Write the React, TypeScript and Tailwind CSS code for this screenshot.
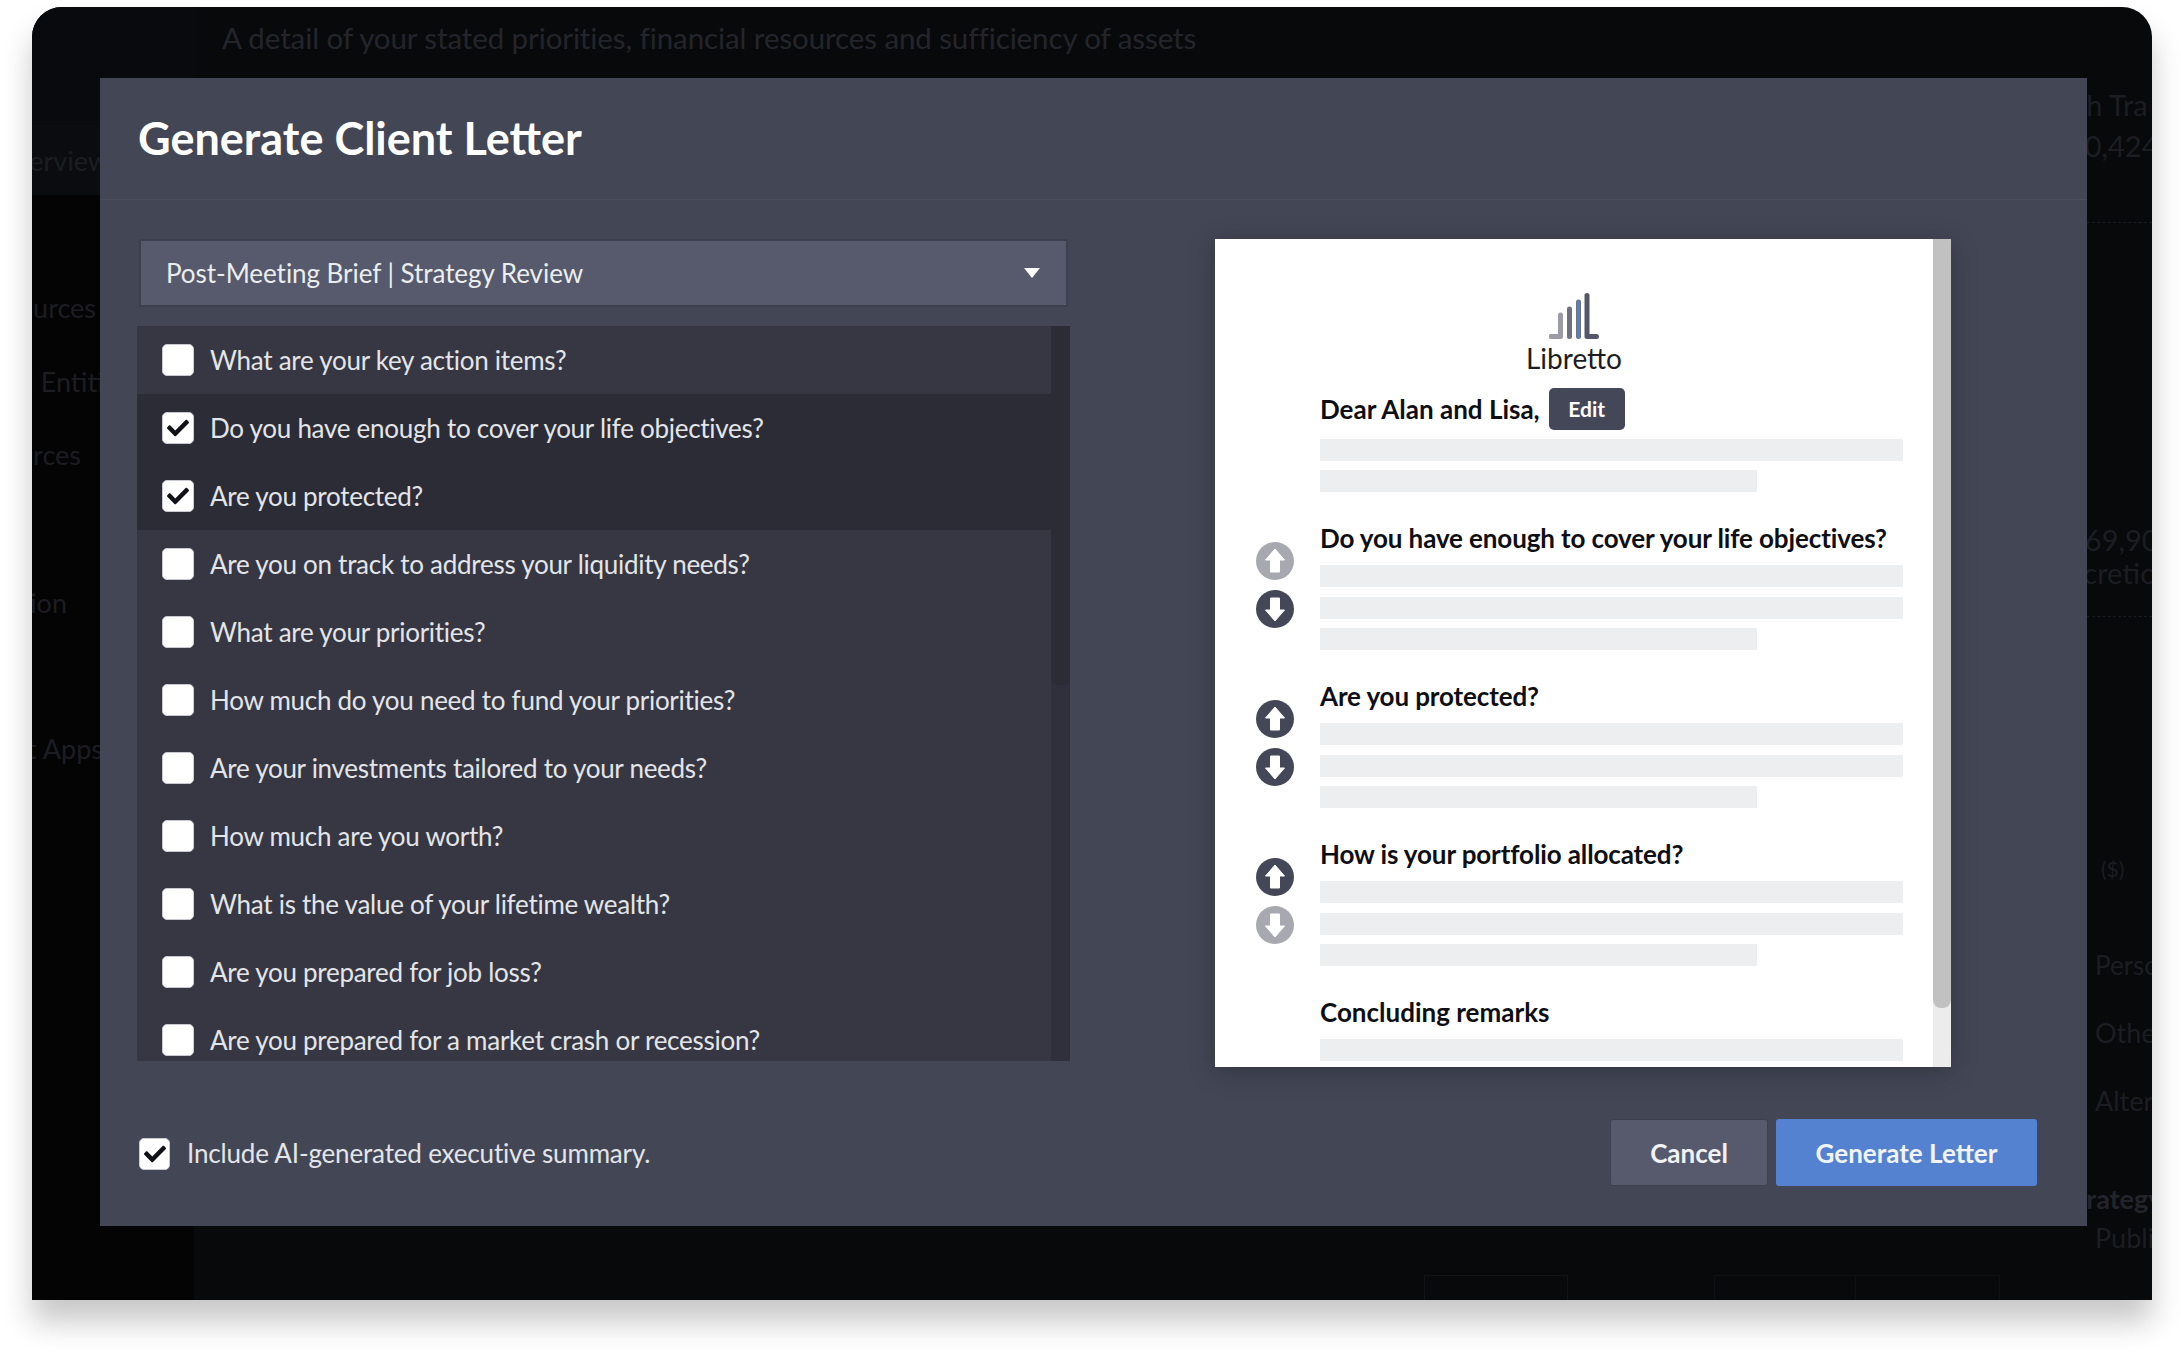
import { FaCheck } from "react-icons/fa";

const questions = [
  { label: "What are your key action items?", checked: false },
  { label: "Do you have enough to cover your life objectives?", checked: true },
  { label: "Are you protected?", checked: true },
  { label: "Are you on track to address your liquidity needs?", checked: false },
  { label: "What are your priorities?", checked: false },
  { label: "How much do you need to fund your priorities?", checked: false },
  { label: "Are your investments tailored to your needs?", checked: false },
  { label: "How much are you worth?", checked: false },
  { label: "What is the value of your lifetime wealth?", checked: false },
  { label: "Are you prepared for job loss?", checked: false },
  { label: "Are you prepared for a market crash or recession?", checked: false },
];

const sections = [
  { title: "Do you have enough to cover your life objectives?", upOff: true, downOff: false },
  { title: "Are you protected?", upOff: false, downOff: false },
  { title: "How is your portfolio allocated?", upOff: false, downOff: true },
];

const Checkbox = ({ checked, size = "w-[32px]" }: { checked: boolean; size?: string }) => (
  <span
    className={`${size} h-[32px] shrink-0 flex items-center justify-center rounded-[5px] bg-white border border-[#c9cad2] text-[#111218]`}
  >
    {checked && <FaCheck size={22} />}
  </span>
);

const Skeleton = ({ short }: { short?: boolean }) => (
  <div className={`h-[22px] bg-[#edeef0] ${short ? "w-[437px]" : "w-[583px]"}`} />
);

const MoveButton = ({ down, off }: { down?: boolean; off: boolean }) => (
  <svg width="38" height="38" viewBox="0 0 38 38" className={off ? "text-[#a8a9b0]" : "text-[#444757]"}>
    <circle cx="19" cy="19" r="19" fill="currentColor" />
    <path
      d={down ? "M19 31L9.5 20H14.5V8H23.5V20H28.5Z" : "M19 7L28.5 18H23.5V30H14.5V18H9.5Z"}
      fill="#ffffff"
      stroke="#ffffff"
      strokeWidth="1"
      strokeLinejoin="round"
    />
  </svg>
);

const Logo = () => (
  <svg width="50" height="46" viewBox="0 0 50 46">
    <path d="M2 43.5H11.5V22" fill="none" stroke="#9a9ba5" strokeWidth="5" strokeLinecap="round" strokeLinejoin="round" />
    <path d="M20.5 16V43.5" fill="none" stroke="#6f7180" strokeWidth="5" strokeLinecap="round" />
    <path d="M29.5 9V43.5" fill="none" stroke="#6f7180" strokeWidth="5" strokeLinecap="round" />
    <path d="M29.5 9V43.5" fill="none" stroke="#5481d0" strokeWidth="2.5" strokeLinecap="round" />
    <path d="M38 2.5V43.5H47.5" fill="none" stroke="#545768" strokeWidth="5" strokeLinecap="round" strokeLinejoin="round" />
  </svg>
);

const sideLabels = [
  { text: "Overview", cls: "mt-[136px] ml-[9px]" },
  { text: "Resources", cls: "mt-[111px] pr-[4px]" },
  { text: "Legal Entities", cls: "mt-[38px] ml-[30px]" },
  { text: "Sources", cls: "mt-[37px] pr-[19px]" },
  { text: "Allocation", cls: "mt-[112px] pr-[33px]" },
  { text: "Client Apps", cls: "mt-[110px] ml-[3px]" },
];

const rightLabels = [
  { text: "Cash Tra", cls: "mt-[80px] -ml-[47px]" },
  { text: "$10,424", cls: "mt-[5px] -ml-[36px]" },
  { text: "", cls: "mt-[58px] h-0 border-t border-dashed border-[#1c1d22]" },
  { text: "$69,90", cls: "mt-[299px] -ml-[19px]" },
  { text: "Discretion", cls: "-mt-[3px] -ml-[45px]" },
  { text: "", cls: "mt-[25px] h-0 border-t border-dashed border-[#1c1d22]" },
  { text: "($)", cls: "mt-[234px] ml-[14px] text-[21px]" },
  { text: "Personal", cls: "mt-[60px] ml-[8px] text-[26px]" },
  { text: "Other", cls: "mt-[32px] ml-[8px] text-[27px]" },
  { text: "Alternative", cls: "mt-[32px] ml-[8px] text-[27px]" },
  { text: "Strategy", cls: "mt-[62px] -ml-[25px] text-[27px] font-bold text-[#23242b]" },
  { text: "Public", cls: "mt-[3px] ml-[8px] text-[27px]" },
];

export default function App() {
  return (
    <div className="w-[2181px] h-[1354px] bg-white pl-[32px] pt-[7px] font-['Lato',sans-serif] overflow-hidden">
      <div className="relative w-[2120px] h-[1293px] rounded-t-[30px] bg-[#08090b] overflow-hidden flex shadow-[0_22px_30px_rgba(0,0,0,0.22)]">
        {/* dimmed page behind the dialog */}
        <div className="w-[162px] shrink-0 flex flex-col text-[27px] leading-[36px] text-[#1c1d22] whitespace-nowrap bg-[linear-gradient(#090a0d_114px,#0b0c0f_114px,#0b0c0f_188px,#040405_188px)]">
          {sideLabels.map((l) => (
            <div key={l.text} className={`${l.cls} w-[68px] flex justify-end`}>
              <span className="shrink-0">{l.text}</span>
            </div>
          ))}
        </div>
        <div className="flex-1 flex flex-col pt-[13px] pl-[28px] text-[29.5px] leading-[36px] text-[#24252b] whitespace-nowrap">
          <div className="tracking-[-0.1px]">
            A detail of your stated priorities, financial resources and sufficiency of assets
          </div>
          <div className="mt-auto pl-[1202px] flex">
            <div className="w-[144px] h-[25px] border border-b-0 border-[#121317]" />
            <div className="ml-[146px] w-[142px] h-[25px] border border-b-0 border-[#101115]" />
            <div className="w-[144px] h-[25px] border border-b-0 border-l-0 border-[#101115]" />
          </div>
        </div>
        <div className="w-[65px] shrink-0 flex flex-col text-[29px] leading-[36px] text-[#1c1d22] whitespace-nowrap">
          {rightLabels.map((l, i) => (
            <div key={i} className={l.cls}>
              {l.text}
            </div>
          ))}
        </div>

        {/* dialog */}
        <div className="absolute left-[68px] top-[71px] w-[1987px] h-[1148px] bg-[#434655] flex flex-col">
          <div className="h-[122px] shrink-0 px-[39px] flex items-center border-b border-[#4a4d5d]">
            <h1 className="text-[45px] font-bold text-white -ml-[1px]">Generate Client Letter</h1>
          </div>

          <div className="flex pt-[39px] pl-[37px]">
            <div className="w-[933px] shrink-0">
              <div className="mx-[2px] h-[68px] flex items-center justify-between pl-[25px] pr-[26px] bg-[#565a6c] border-2 border-[#3d404e] text-[#eceded] text-[26px] tracking-[-0.05px]">
                <span>Post-Meeting Brief | Strategy Review</span>
                <svg width="16" height="10" viewBox="0 0 16 10">
                  <path d="M0 0H16L8 10Z" fill="#ffffff" />
                </svg>
              </div>
              <div className="mt-[19px] h-[735px] flex bg-[#363742] overflow-hidden">
                <div className="flex-1">
                  {questions.map((q) => (
                    <div
                      key={q.label}
                      className={`h-[68px] flex items-center gap-[16px] pl-[25px] text-[26px] tracking-[-0.27px] text-[#e4e5e8] ${
                        q.checked ? "bg-[#2b2c36]" : ""
                      }`}
                    >
                      <Checkbox checked={q.checked} />
                      <span>{q.label}</span>
                    </div>
                  ))}
                </div>
                <div className="w-[19px] shrink-0 bg-[#2f303b]">
                  <div className="h-[359px] bg-[#2b2c36] rounded-b-[5px]" />
                </div>
              </div>
            </div>

            <div className="ml-[145px] w-[736px] h-[828px] flex bg-white overflow-hidden shadow-[0_4px_24px_rgba(0,0,0,0.25)]">
              <div className="flex-1 pt-[54px] text-[#0e0f14]">
                <div className="flex flex-col items-center">
                  <Logo />
                  <div className="h-[38px] leading-[38px] text-[28px] text-[#1b1c24]">Libretto</div>
                </div>
                <div className="mt-[11px] pl-[105px]">
                  <div className="flex items-center gap-[9px] h-[42px]">
                    <span className="text-[26px] font-bold">Dear Alan and Lisa,</span>
                    <button className="w-[76px] h-[42px] rounded-[5px] bg-[#444757] text-white text-[21px] font-bold">
                      Edit
                    </button>
                  </div>
                  <div className="mt-[9px] flex flex-col gap-[9px]">
                    <Skeleton />
                    <Skeleton short />
                  </div>
                </div>
                <div className="mt-[28px] flex flex-col gap-[28px]">
                  {sections.map((s) => (
                    <div key={s.title} className="flex pl-[41px] gap-[26px]">
                      <div className="w-[38px] pt-[22px] flex flex-col gap-[10px] shrink-0">
                        <MoveButton off={s.upOff} />
                        <MoveButton down off={s.downOff} />
                      </div>
                      <div>
                        <div className="h-[36px] leading-[36px] text-[26px] font-bold tracking-[-0.12px] whitespace-nowrap">
                          {s.title}
                        </div>
                        <div className="mt-[9px] flex flex-col gap-[9.5px]">
                          <Skeleton />
                          <Skeleton />
                          <Skeleton short />
                        </div>
                      </div>
                    </div>
                  ))}
                  <div className="pl-[105px]">
                    <div className="h-[36px] leading-[36px] text-[26px] font-bold">Concluding remarks</div>
                    <div className="mt-[9px]">
                      <Skeleton />
                    </div>
                  </div>
                </div>
              </div>
              <div className="w-[18px] shrink-0 bg-[#ececec]">
                <div className="h-[769px] bg-[#c1c1c1] rounded-b-[8px]" />
              </div>
            </div>
          </div>

          <div className="mt-[52px] pl-[39px] pr-[50px] flex items-center justify-between">
            <div className="flex items-center gap-[17px] pt-[2px] text-[26px] tracking-[-0.17px] text-[#e4e5e8]">
              <Checkbox checked size="w-[31px]" />
              <span>Include AI-generated executive summary.</span>
            </div>
            <div className="flex gap-[8px]">
              <button className="w-[158px] h-[67px] pt-[1px] rounded-[3px] bg-[#565a6c] border border-[#3d404e] text-[#f2f2f4] text-[26px] font-bold">
                Cancel
              </button>
              <button className="w-[261px] h-[67px] pt-[1px] rounded-[3px] bg-[#5481d0] text-[#f2f4fa] text-[26px] font-bold">
                Generate Letter
              </button>
            </div>
          </div>
        </div>
      </div>
    </div>
  );
}
